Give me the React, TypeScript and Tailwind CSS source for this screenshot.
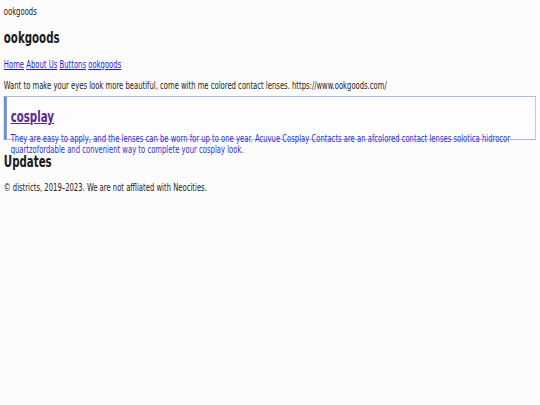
export default function App() {
  return (
    <div className="min-h-[405px] w-[540px] overflow-hidden bg-[#fcfcfc]">
      <div className="w-[710px] origin-top-left scale-x-[0.76] px-[5px] pt-[6px] font-['DejaVu_Sans_Condensed','DejaVu_Sans',sans-serif] text-[10px] leading-[11px] text-[#1a1a1a]">
        <div>ookgoods</div>
        <h1 className="mt-[12px] text-[15px] font-bold leading-[18px]">ookgoods</h1>
        <nav className="mt-[12px] flex gap-[3px] text-[#1a1add]">
          <a className="underline" href="#">Home</a>
          <a className="underline" href="#">About Us</a>
          <a className="underline" href="#">Buttons</a>
          <a className="underline" href="#">ookgoods</a>
        </nav>
        <p className="mt-[10px]">Want to make your eyes look more beautiful, come with me colored contact lenses. https://www.ookgoods.com/</p>
        <div className="mt-[5px] h-[44px] border border-l-[4px] border-[#a9b9e6] border-l-[#6f8fd3] bg-[#fdfdff] pl-[5px] pt-[10px]">
          <a className="text-[15px] font-bold leading-[20px] text-[#5a2a8a] underline" href="#">cosplay</a>
          <p className="mt-[6px] text-[#2f2fd6]">
            They are easy to apply, and the lenses can be worn for up to one year. Acuvue Cosplay Contacts are an afcolored contact lenses solotica hidrocor quartzofordable and convenient way to complete your cosplay look.
          </p>
        </div>
        <h2 className="mt-[13px] text-[15px] font-bold leading-[18px]">Updates</h2>
        <p className="mt-[11px]">© districts, 2019–2023. We are not affliated with Neocities.</p>
      </div>
    </div>
  );
}
